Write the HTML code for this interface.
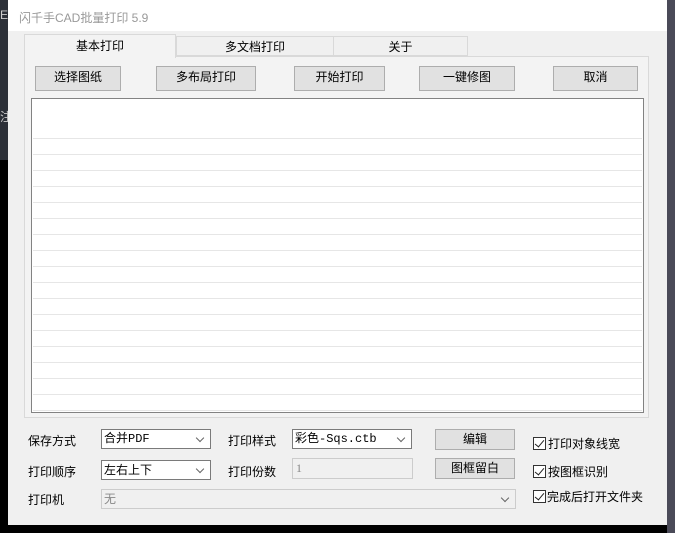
<!DOCTYPE html>
<html><head><meta charset="utf-8"><style>
body{margin:0;width:675px;height:533px;background:#000;position:relative;overflow:hidden;font-family:"Liberation Sans","Noto Sans CJK SC",sans-serif;font-size:12px;color:#000}
.a{position:absolute}
.btn{position:absolute;background:#e1e1e1;border:1px solid #adadad;box-sizing:border-box;text-align:center;line-height:21px;font-size:12px}
.lbl{position:absolute;font-size:12px}
.cb{position:absolute;width:13px;height:13px;border:1px solid #333;box-sizing:border-box;background:#fff}
.cb:after{content:"";position:absolute;left:3px;top:0px;width:4px;height:8px;border:solid #222;border-width:0 1.5px 1.5px 0;transform:rotate(40deg)}
.sel{position:absolute;background:#fff;border:1px solid #7a7a7a;box-sizing:border-box;height:20px;line-height:18px;padding-left:2px;font-size:12px;font-family:"Liberation Mono","Noto Sans CJK SC",monospace}
.sel:after{content:"";position:absolute;right:7px;top:5px;width:5px;height:5px;border:solid #666;border-width:0 1px 1px 0;transform:rotate(45deg)}
</style></head><body>
<div class="a" style="left:0;top:0;width:8px;height:160px;background:#2c3038"></div>
<div class="a" style="left:0;top:108px;color:#ccc;font-size:12px">注</div>
<div class="a" style="left:0;top:8px;color:#ccc;font-size:12px">E</div>
<div class="a" style="left:667px;top:0;width:8px;height:533px;background:#4a4a58"></div>
<div class="a" style="left:8px;top:0;width:659px;height:525px;background:#f0f0f0"></div>
<div class="a" style="left:8px;top:0;width:659px;height:31px;background:#fff"></div>
<div class="a" style="left:19px;top:9px;color:#999;font-size:12px">闪千手CAD批量打印 5.9</div>
<div class="a" style="left:24px;top:56px;width:625px;height:362px;background:#f3f3f3;border:1px solid #d9d9d9;box-sizing:border-box"></div>
<div class="a" style="left:176px;top:36px;width:158px;height:20px;background:#f0f0f0;border:1px solid #d9d9d9;box-sizing:border-box;text-align:center;line-height:20px">多文档打印</div>
<div class="a" style="left:333px;top:36px;width:135px;height:20px;background:#f0f0f0;border:1px solid #d9d9d9;box-sizing:border-box;text-align:center;line-height:20px">关于</div>
<div class="a" style="left:24px;top:34px;width:152px;height:24px;background:#f3f3f3;border:1px solid #d9d9d9;border-bottom:none;box-sizing:border-box;text-align:center;line-height:22px">基本打印</div>
<div class="btn" style="left:35px;top:66px;width:86px;height:25px">选择图纸</div>
<div class="btn" style="left:156px;top:66px;width:100px;height:25px">多布局打印</div>
<div class="btn" style="left:294px;top:66px;width:91px;height:25px">开始打印</div>
<div class="btn" style="left:419px;top:66px;width:96px;height:25px">一键修图</div>
<div class="btn" style="left:553px;top:66px;width:85px;height:25px">取消</div>
<div class="a" style="left:31px;top:98px;width:613px;height:315px;background:#fff;border:1px solid #828282;box-sizing:border-box"></div>
<div class="a" style="left:33px;top:123px;width:609px;height:288px;background-image:repeating-linear-gradient(to bottom,transparent 0,transparent 15px,#e6e6e6 15px,#e6e6e6 16px)"></div>
<div class="lbl" style="left:28px;top:432px">保存方式</div>
<div class="lbl" style="left:28px;top:463px">打印顺序</div>
<div class="lbl" style="left:28px;top:491px">打印机</div>
<div class="lbl" style="left:228px;top:432px">打印样式</div>
<div class="lbl" style="left:228px;top:463px">打印份数</div>
<div class="sel" style="left:101px;top:429px;width:110px">合并PDF</div>
<div class="sel" style="left:101px;top:460px;width:110px;font-family:'Liberation Sans','Noto Sans CJK SC',sans-serif">左右上下</div>
<div class="sel" style="left:292px;top:429px;width:120px">彩色-Sqs.ctb</div>
<div class="a" style="left:292px;top:458px;width:121px;height:21px;border:1px solid #ccc;box-sizing:border-box;background:#f0f0f0;color:#888;font-size:12px;padding-left:3px;line-height:18px;font-family:'Liberation Serif',serif">1</div>
<div class="sel" style="left:101px;top:489px;width:415px;border-color:#ccc;background:#f0f0f0;color:#888;font-family:'Liberation Sans','Noto Sans CJK SC',sans-serif">无</div>
<div class="btn" style="left:435px;top:429px;width:80px;height:21px;line-height:19px">编辑</div>
<div class="btn" style="left:435px;top:458px;width:80px;height:21px;line-height:19px">图框留白</div>
<div class="cb" style="left:533px;top:437px"></div><div class="lbl" style="left:548px;top:435px">打印对象线宽</div>
<div class="cb" style="left:533px;top:465px"></div><div class="lbl" style="left:548px;top:463px">按图框识别</div>
<div class="cb" style="left:533px;top:490px"></div><div class="lbl" style="left:547px;top:488px">完成后打开文件夹</div>
</body></html>
